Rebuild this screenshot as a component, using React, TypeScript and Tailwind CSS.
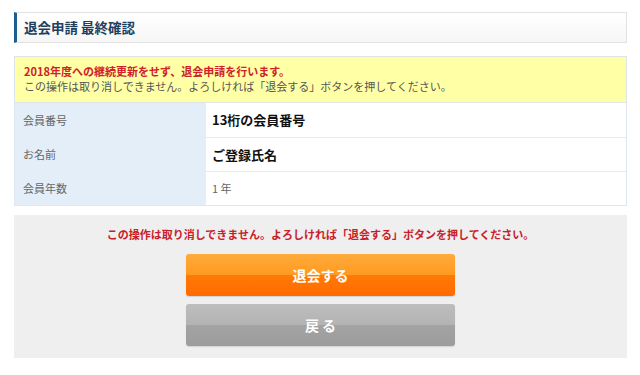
import React from "react";

export default function App() {
  const font = { fontFamily: '"Noto Sans CJK JP", "Noto Sans", sans-serif' };
  return (
    <div className="w-[640px] h-[375px] bg-white" style={font}>
      <div className="ml-[14px] w-[613px] pt-[12px]">
        <div className="h-[31px] border border-[#e2e2e2] border-l-[3px] border-l-[#1d5e8f] bg-gradient-to-b from-white to-[#f6f6f6] flex items-center pl-[7px]">
          <span className="text-[13.5px] font-bold text-[#1f3f5e] leading-none">退会申請 最終確認</span>
        </div>

        <div className="mt-[13px] border border-[#dde4ea] bg-[#ffffa6] pl-[9px] pt-[7px] h-[47px]">
          <p className="text-[11px] font-bold text-[#d0202a] leading-[15px]">2018年度への継続更新をせず、退会申請を行います。</p>
          <p className="text-[11px] text-[#555] leading-[15px]">この操作は取り消しできません。よろしければ「退会する」ボタンを押してください。</p>
        </div>

        <div className="border-x border-b border-[#e1e7ee]">
          {[
            { label: "会員番号", value: "13桁の会員番号", bold: true },
            { label: "お名前", value: "ご登録氏名", bold: true },
            { label: "会員年数", value: "1 年", bold: false },
          ].map((r, i) => (
            <div key={i} className={`flex h-[34px] ${i > 0 ? "border-t border-[#e6ebf0]" : ""}`}>
              <div className="w-[191px] bg-[#e3eef8] flex items-center pl-[8px] text-[11px] text-[#666]">{r.label}</div>
              <div className={`flex-1 bg-white flex items-center pl-[6px] ${r.bold ? "text-[13px] font-bold text-[#111]" : "text-[11px] text-[#666]"}`}>{r.value}</div>
            </div>
          ))}
        </div>

        <div className="mt-[9px] bg-[#efefef] h-[143px] flex flex-col items-center pt-[12px]">
          <p className="text-[11px] font-bold text-[#c8202a] leading-[14px]">この操作は取り消しできません。よろしければ「退会する」ボタンを押してください。</p>
          <button className="mt-[13px] w-[269px] h-[42px] rounded-[3px] bg-[linear-gradient(to_bottom,#ffab3a_0%,#ff9a22_50%,#ff7a06_51%,#ff6a00_100%)] text-white text-[14px] font-bold shadow-[0_1px_1px_rgba(0,0,0,0.12)]">退会する</button>
          <button className="mt-[8px] w-[269px] h-[42px] rounded-[3px] bg-[linear-gradient(to_bottom,#bdbdbd_0%,#b3b3b3_50%,#a3a3a3_51%,#9c9c9c_100%)] text-white text-[14px] font-bold shadow-[0_1px_1px_rgba(0,0,0,0.12)]">戻 る</button>
        </div>
      </div>
    </div>
  );
}
